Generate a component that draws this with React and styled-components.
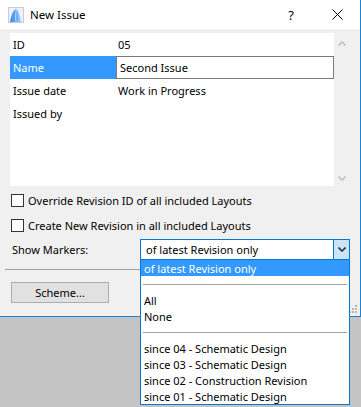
import React from 'react';
import styled, { createGlobalStyle } from 'styled-components';

const GlobalStyle = createGlobalStyle`
  html, body {
    margin: 0;
    padding: 0;
    background: #c4c4c4;
    font-family: 'Noto Sans', 'Liberation Sans', sans-serif;
    font-size: 11px;
    color: #000;
  }
  * { box-sizing: border-box; }
`;

const Page = styled.div`
  width: 361px;
  height: 407px;
  background: #c4c4c4;
`;

const Window = styled.div`
  position: relative;
  width: 361px;
  height: 317px;
  background: #f0f0f0;
  border-right: 1px solid #1883d7;
  border-bottom: 1px solid #1883d7;
  display: flex;
  flex-direction: column;
`;

const TitleBar = styled.div`
  height: 29px;
  background: #fff;
  display: flex;
  align-items: center;
  padding-left: 8px;
`;

const AppIcon = styled.svg`
  width: 16px;
  height: 16px;
  flex: none;
`;

const Title = styled.span`
  margin-left: 6px;
  font-size: 11.5px;
  color: #000;
  flex: 1;
`;

const TitleButton = styled.div`
  width: 46px;
  height: 29px;
  display: flex;
  align-items: center;
  justify-content: center;
  font-size: 13px;
  color: #000;
`;

const Body = styled.div`
  flex: 1;
  padding: 4px 0 0 10px;
  display: flex;
  flex-direction: column;
`;

const TableWrap = styled.div`
  display: flex;
  height: 153px;
`;

const Table = styled.div`
  width: 324px;
  background: #fff;
  display: flex;
  flex-direction: column;
`;

const Row = styled.div`
  height: 23px;
  display: flex;
  align-items: center;
`;

const Label = styled.div`
  width: 106px;
  height: 100%;
  padding-left: 3px;
  display: flex;
  align-items: center;
  background: ${({ $selected }) => ($selected ? '#3399ff' : 'transparent')};
  color: ${({ $selected }) => ($selected ? '#fff' : '#000')};
`;

const Value = styled.div`
  flex: 1;
  height: 100%;
  padding-left: ${({ $editing }) => ($editing ? '3px' : '2px')};
  display: flex;
  align-items: center;
  border: ${({ $editing }) => ($editing ? '1px solid #7a7a7a' : 'none')};
`;

const ScrollCol = styled.div`
  width: 16px;
  display: flex;
  flex-direction: column;
  justify-content: space-between;
  align-items: center;
  padding: 8px 0 5px;
`;

const CheckRow = styled.label`
  display: flex;
  align-items: center;
  gap: 4px;
  height: 13px;
  margin-top: ${({ $top }) => $top}px;
  padding-left: 1px;
`;

const Box = styled.span`
  width: 13px;
  height: 13px;
  border: 1px solid #333;
  background: #fff;
  flex: none;
`;

const MarkerRow = styled.div`
  display: flex;
  align-items: center;
  margin-top: 7px;
  height: 21px;
`;

const MarkerLabel = styled.div`
  width: 130px;
  padding-left: 2px;
`;

const SelectWrap = styled.div`
  position: relative;
  width: 210px;
  height: 21px;
`;

const SelectBox = styled.div`
  height: 21px;
  border: 1px solid #0078d7;
  background: #fff;
  display: flex;
  align-items: center;
  padding-left: 5px;
`;

const SelectText = styled.span`
  flex: 1;
`;

const DropButton = styled.div`
  width: 16px;
  height: 19px;
  background: #cce4f7;
  border-left: 1px solid #0078d7;
  display: flex;
  align-items: center;
  justify-content: center;
`;

const List = styled.div`
  position: absolute;
  top: 21px;
  left: 0;
  width: 210px;
  background: #fff;
  border: 1px solid #0078d7;
  border-top: none;
  z-index: 10;
  display: flex;
  flex-direction: column;
`;

const Item = styled.div`
  height: 16px;
  display: flex;
  align-items: center;
  padding-left: 3px;
  background: ${({ $active }) => ($active ? '#3399ff' : '#fff')};
  color: ${({ $active }) => ($active ? '#fff' : '#000')};
`;

const ListSep = styled.div`
  height: 16px;
  display: flex;
  align-items: center;
  padding: 0 2px;
  &::after {
    content: '';
    flex: 1;
    height: 1px;
    background: #a0a0a0;
  }
`;

const Divider = styled.div`
  height: 1px;
  width: 135px;
  background: #a0a0a0;
  margin: 9px 0 0 -5px;
`;

const Button = styled.div`
  margin-top: 12px;
  margin-left: 1px;
  width: 98px;
  height: 21px;
  background: #e1e1e1;
  border: 1px solid #adadad;
  display: flex;
  align-items: center;
  justify-content: center;
`;

const Grip = styled.svg`
  position: absolute;
  right: 3px;
  bottom: 3px;
  width: 8px;
  height: 8px;
`;

const Chevron = ({ up, color = '#c2c2c2' }) => (
  <svg width="8" height="5" viewBox="0 0 8 5">
    <path
      d={up ? 'M0.5 4.5 L4 1 L7.5 4.5' : 'M0.5 0.5 L4 4 L7.5 0.5'}
      fill="none"
      stroke={color}
      strokeWidth="1.6"
    />
  </svg>
);

const rows = [
  { label: 'ID', value: '05' },
  { label: 'Name', value: 'Second Issue', selected: true },
  { label: 'Issue date', value: 'Work in Progress' },
  { label: 'Issued by', value: '' },
];

const items = [
  { text: 'of latest Revision only', active: true },
  { sep: true },
  { text: 'All' },
  { text: 'None' },
  { sep: true },
  { text: 'since 04 - Schematic Design' },
  { text: 'since 03 - Schematic Design' },
  { text: 'since 02 - Construction Revision' },
  { text: 'since 01 - Schematic Design' },
];

export default function App() {
  return (
    <Page>
      <GlobalStyle />
      <Window>
        <TitleBar>
          <AppIcon viewBox="0 0 16 16">
            <rect x="0.5" y="0.5" width="15" height="15" fill="#eef2f8" stroke="#c8ccd4" />
            <defs>
              <linearGradient id="ac" x1="0" y1="0" x2="1" y2="0">
                <stop offset="0" stopColor="#3f8ef0" />
                <stop offset="0.55" stopColor="#5aa6f6" />
                <stop offset="1" stopColor="#cfe6fd" />
              </linearGradient>
            </defs>
            <path d="M2 15 C3 9 5 3 8.5 1.5 C10 4 12 10 14 15 Z" fill="url(#ac)" />
            <path d="M8.5 1.5 C7.5 6 7.5 11 8 15" fill="none" stroke="#ffffff" strokeWidth="0.8" opacity="0.8" />
          </AppIcon>
          <Title>New Issue</Title>
          <TitleButton>?</TitleButton>
          <TitleButton>
            <svg width="11" height="11" viewBox="0 0 11 11">
              <path d="M0.5 0.5 L10.5 10.5 M10.5 0.5 L0.5 10.5" stroke="#000" strokeWidth="1" />
            </svg>
          </TitleButton>
        </TitleBar>
        <Body>
          <TableWrap>
            <Table>
              {rows.map((r) => (
                <Row key={r.label}>
                  <Label $selected={r.selected}>{r.label}</Label>
                  <Value $editing={r.selected}>{r.value}</Value>
                </Row>
              ))}
            </Table>
            <ScrollCol>
              <Chevron up />
              <Chevron />
            </ScrollCol>
          </TableWrap>
          <CheckRow $top={8}>
            <Box />
            Override Revision ID of all included Layouts
          </CheckRow>
          <CheckRow $top={12}>
            <Box />
            Create New Revision in all included Layouts
          </CheckRow>
          <MarkerRow>
            <MarkerLabel>Show Markers:</MarkerLabel>
            <SelectWrap>
              <SelectBox>
                <SelectText>of latest Revision only</SelectText>
                <DropButton>
                  <Chevron color="#333" />
                </DropButton>
              </SelectBox>
              <List>
                {items.map((it, i) =>
                  it.sep ? (
                    <ListSep key={i} />
                  ) : (
                    <Item key={i} $active={it.active}>
                      {it.text}
                    </Item>
                  )
                )}
              </List>
            </SelectWrap>
          </MarkerRow>
          <Divider />
          <Button>Scheme...</Button>
        </Body>
        <Grip viewBox="0 0 8 8">
          <rect x="6" y="0" width="2" height="2" fill="#b8b8b8" />
          <rect x="3" y="3" width="2" height="2" fill="#b8b8b8" />
          <rect x="6" y="3" width="2" height="2" fill="#b8b8b8" />
          <rect x="0" y="6" width="2" height="2" fill="#b8b8b8" />
          <rect x="3" y="6" width="2" height="2" fill="#b8b8b8" />
          <rect x="6" y="6" width="2" height="2" fill="#b8b8b8" />
        </Grip>
      </Window>
    </Page>
  );
}
